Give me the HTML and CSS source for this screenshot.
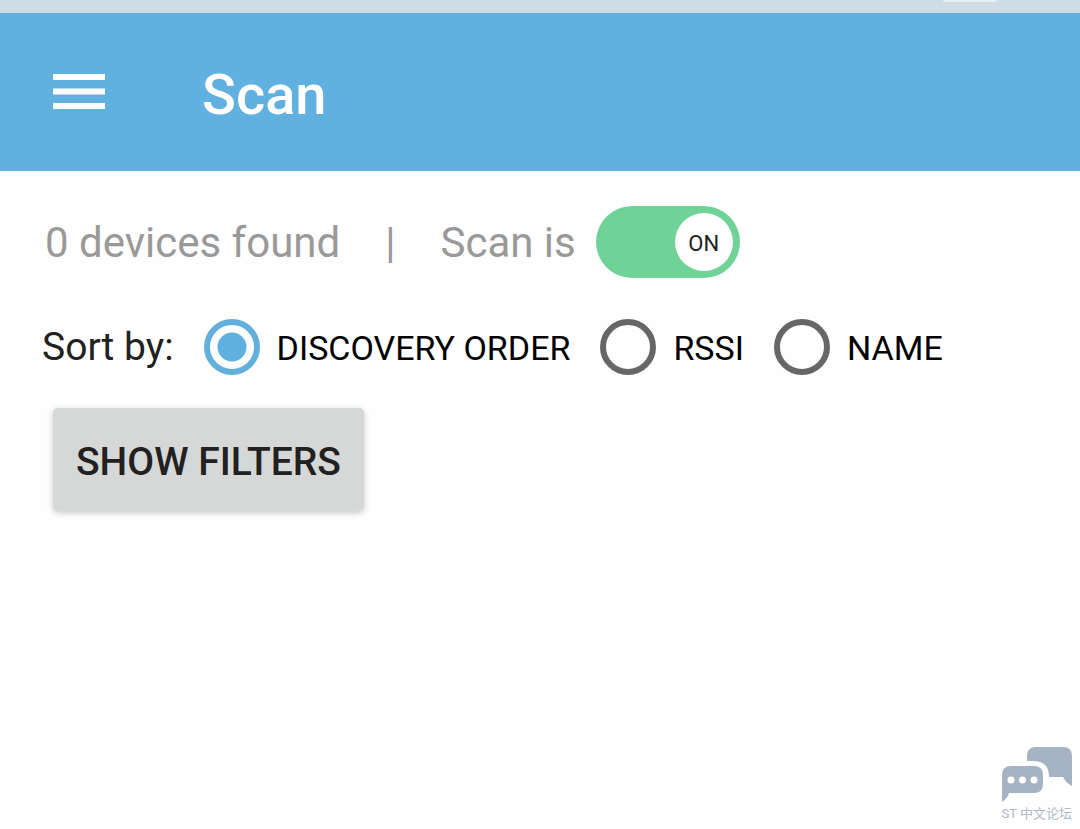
FILE: index.html
```html
<!DOCTYPE html>
<html lang="en">
<head>
    <meta charset="UTF-8">
    <meta name="viewport" content="width=device-width, initial-scale=1.0">
    <title>Scan</title>
    <link rel="stylesheet" href="styles.css">
</head>
<body>
    <div class="status-bar"><div class="status-pill"></div></div>
    <header class="toolbar">
        <button type="button" class="menu-button" aria-label="Menu">
            <svg width="52" height="36" viewBox="0 0 52 36" fill="#fff">
                <rect width="52" height="6"/>
                <rect y="14.5" width="52" height="6"/>
                <rect y="29" width="52" height="6"/>
            </svg>
        </button>
        <h1>Scan</h1>
    </header>

    <main class="content">
        <div class="scan-row">
            <span class="scan-text">0 devices found</span>
            <span class="scan-text divider">|</span>
            <label class="scan-text" for="scan-toggle">Scan is</label>
            <div class="switch">
                <input type="checkbox" id="scan-toggle" checked>
                <span class="thumb">ON</span>
            </div>
        </div>

        <div class="sort-row" role="radiogroup" aria-labelledby="sort-label">
            <span class="sort-label" id="sort-label">Sort by:</span>
            <label class="option"><input type="radio" name="sort" checked><span>DISCOVERY ORDER</span></label>
            <label class="option"><input type="radio" name="sort"><span>RSSI</span></label>
            <label class="option"><input type="radio" name="sort"><span>NAME</span></label>
        </div>

        <button type="button" class="filter-button">SHOW FILTERS</button>
    </main>

    <footer class="forum-mark">
        <svg width="72" height="57" viewBox="0 0 72 57" fill="#a6b3c2">
            <path d="M27 14V9Q27 0 36 0H63Q72 0 72 9V39Q66 36 63 30H49V28Q48 14 33 14Z"/>
            <path d="M11 19H34Q43 19 43 28V37Q43 46 34 46H9Q7 52 2 55V28Q2 19 11 19Z"/>
            <circle cx="11" cy="33" r="3.5" fill="#fff"/>
            <circle cx="22.5" cy="33" r="3.5" fill="#fff"/>
            <circle cx="34" cy="33" r="3.5" fill="#fff"/>
        </svg>
        <span>ST 中文论坛</span>
    </footer>
</body>
</html>
```
FILE: styles.css
```css
* {
    box-sizing: border-box;
}

body {
    margin: 0;
    min-height: 100vh;
    display: flex;
    flex-direction: column;
    background: #fefefe;
    color: #212121;
    font-family: Roboto, "Noto Sans CJK SC", sans-serif;
}

.status-bar {
    height: 13px;
    background: #cddce5;
    padding-right: 83px;
}

.status-pill {
    width: 54px;
    height: 2px;
    margin-left: auto;
    background: #e8eff2;
    border-radius: 0 0 8px 8px;
}

.toolbar {
    height: 158px;
    padding: 0 53px;
    display: flex;
    align-items: center;
    gap: 97px;
    background: #60b1e0;
    color: #fff;
}

.menu-button {
    display: flex;
    padding: 0;
    border: none;
    background: none;
    cursor: pointer;
}

.toolbar h1 {
    margin: 0;
    padding-top: 6px;
    font-size: 56px;
    line-height: 64px;
    font-weight: 500;
}

.content {
    padding: 35px 42px;
}

.scan-row {
    display: flex;
    align-items: center;
    padding-left: 3px;
    font-size: 42px;
    color: #999;
}

.scan-text {
    padding-top: 2px;
    line-height: 56px;
}

.divider {
    margin: 0 45px;
}

.switch {
    position: relative;
    width: 144px;
    height: 72px;
    margin-left: 20px;
}

.switch input {
    appearance: none;
    display: block;
    width: 100%;
    height: 100%;
    margin: 0;
    border-radius: 36px;
    background: #6fd297;
    cursor: pointer;
}

.thumb {
    position: absolute;
    top: 7px;
    right: 7px;
    width: 58px;
    height: 58px;
    border-radius: 50%;
    background: #fff;
    color: #212121;
    font-size: 22px;
    line-height: 62px;
    text-align: center;
    pointer-events: none;
}

.sort-row {
    display: flex;
    align-items: center;
    gap: 30px;
    margin-top: 41px;
}

.sort-label {
    font-size: 39px;
    line-height: 56px;
}

.option {
    display: flex;
    align-items: center;
    gap: 17px;
    color: #000;
    font-size: 34px;
    line-height: 54px;
    white-space: nowrap;
}

.option span {
    padding-top: 2px;
}

.option input {
    appearance: none;
    width: 56px;
    height: 56px;
    margin: 0;
    border: 6px solid #666;
    border-radius: 50%;
}

.option input:checked {
    border-color: #64b0dc;
    background: radial-gradient(circle, #60b1e0 14px, transparent 15px);
}

.filter-button {
    display: block;
    margin: 33px 0 0 11px;
    padding: 32px 23px 27px;
    border: none;
    border-radius: 5px;
    background: #d6d8d7;
    box-shadow: 0 2px 6px rgba(0, 0, 0, 0.22);
    color: #212121;
    font-family: inherit;
    font-size: 39px;
    line-height: 44px;
    font-weight: 500;
    cursor: pointer;
}

.forum-mark {
    margin-top: auto;
    padding: 0 8px 5px 0;
    display: flex;
    flex-direction: column;
    align-items: flex-end;
    color: #b0bac6;
    font-size: 13px;
    line-height: 20px;
}
```
